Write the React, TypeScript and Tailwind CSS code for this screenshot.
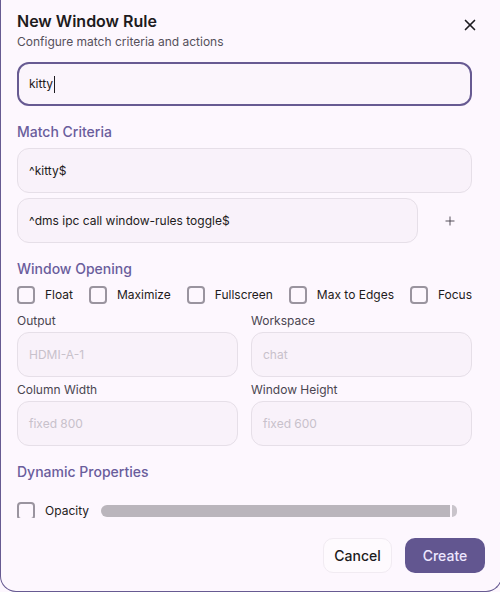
import React from 'react';
import { X, Plus } from 'lucide-react';

const font = { fontFamily: 'Inter, "Noto Sans", sans-serif' };

function Checkbox() {
  return <div className="w-[18px] h-[18px] shrink-0 rounded-[4px] border-2 border-[#9a949f] bg-transparent" />;
}

function CheckItem({ label }: { label: string }) {
  return (
    <div className="flex items-center gap-[10px]">
      <Checkbox />
      <span className="text-[12px] leading-[18px] text-[#1d1b20]">{label}</span>
    </div>
  );
}

function Field({ value, placeholder, className = '' }: { value?: string; placeholder?: string; className?: string }) {
  return (
    <div
      className={`h-[45px] flex items-center rounded-[12px] border border-[#e6dfe8] bg-[#f9f2fa] pl-[11px] text-[12px] ${className}`}
    >
      {value ? (
        <span className="text-[#1d1b20]">{value}</span>
      ) : (
        <span className="text-[#c8c1cb]">{placeholder}</span>
      )}
    </div>
  );
}

function SectionTitle({ children }: { children: React.ReactNode }) {
  return <h3 className="mt-[16px] text-[14px] leading-[20px] font-medium text-[#6a5d9c]">{children}</h3>;
}

function FieldLabel({ children }: { children: React.ReactNode }) {
  return <div className="text-[12px] leading-[18px] text-[#4a4550]">{children}</div>;
}

export default function App() {
  return (
    <div className="w-[500px] h-[592px] overflow-hidden bg-[#fdf7fe]" style={font}>
      <div className="w-[502px] h-[592px] flex flex-col rounded-b-[16px] border-l border-r border-b border-[#675a92] bg-[#fdf7fe]">
        {/* Header */}
        <div className="flex items-start justify-between pl-[16px] pr-[19px] pt-[10px]">
          <div>
            <h2 className="text-[16px] leading-[22px] font-semibold text-[#1d1b20]">New Window Rule</h2>
            <p className="mt-[1px] text-[12px] leading-[18px] text-[#55505b]">Configure match criteria and actions</p>
          </div>
          <button className="mt-[3px] w-6 h-6 flex items-center justify-center text-[#1d1b20]">
            <X size={18} strokeWidth={2.2} />
          </button>
        </div>

        {/* Body */}
        <div className="mt-[11px] h-[456px] overflow-hidden pl-[16px] w-[471px]">
          <div className="h-[44px] flex items-center rounded-[12px] border-2 border-[#675a92] bg-[#fbf5fc] pl-[10px] text-[12px] text-[#1d1b20]">
            <span>kitty</span>
            <span className="ml-[1px] w-px h-[17px] bg-[#1d1b20]" />
          </div>

          <SectionTitle>Match Criteria</SectionTitle>
          <div className="mt-[6px] flex flex-col gap-[5px]">
            <Field value="^kitty$" />
            <div className="flex items-center">
              <Field value="^dms ipc call window-rules toggle$" className="w-[401px]" />
              <button className="ml-[16px] w-8 h-8 flex items-center justify-center text-[#3f3a45]">
                <Plus size={14} strokeWidth={1.5} />
              </button>
            </div>
          </div>

          <SectionTitle>Window Opening</SectionTitle>
          <div className="mt-[7px] flex items-center justify-between">
            <CheckItem label="Float" />
            <CheckItem label="Maximize" />
            <CheckItem label="Fullscreen" />
            <CheckItem label="Max to Edges" />
            <CheckItem label="Focus" />
          </div>

          <div className="mt-[8px] grid grid-cols-2 gap-x-[13px]">
            <div>
              <FieldLabel>Output</FieldLabel>
              <Field placeholder="HDMI-A-1" className="mt-[2px]" />
            </div>
            <div>
              <FieldLabel>Workspace</FieldLabel>
              <Field placeholder="chat" className="mt-[2px]" />
            </div>
            <div className="mt-[4px]">
              <FieldLabel>Column Width</FieldLabel>
              <Field placeholder="fixed 800" className="mt-[2px]" />
            </div>
            <div className="mt-[4px]">
              <FieldLabel>Window Height</FieldLabel>
              <Field placeholder="fixed 600" className="mt-[2px]" />
            </div>
          </div>

          <SectionTitle>Dynamic Properties</SectionTitle>
          <div className="mt-[20px] flex items-center">
            <Checkbox />
            <span className="ml-[10px] text-[12px] leading-[18px] text-[#1d1b20]">Opacity</span>
            <div className="ml-[12px] flex items-center">
              <div className="w-[349px] h-[12px] rounded-l-full bg-[#bab5bc]" />
              <div className="ml-[2px] w-[5px] h-[12px] rounded-r-full bg-[#c9c4cb]" />
            </div>
          </div>
        </div>

        {/* Footer */}
        <div className="mt-[20px] flex justify-end gap-[13px] pr-[16px]">
          <button className="h-[35px] w-[69px] rounded-[10px] border border-[#f1ebf2] bg-[#fefafe] text-[14px] font-medium text-[#1d1b20]">
            Cancel
          </button>
          <button className="h-[35px] w-[80px] rounded-[10px] bg-[#625690] text-[14px] font-medium text-[#ede6ff]">
            Create
          </button>
        </div>
      </div>
    </div>
  );
}
